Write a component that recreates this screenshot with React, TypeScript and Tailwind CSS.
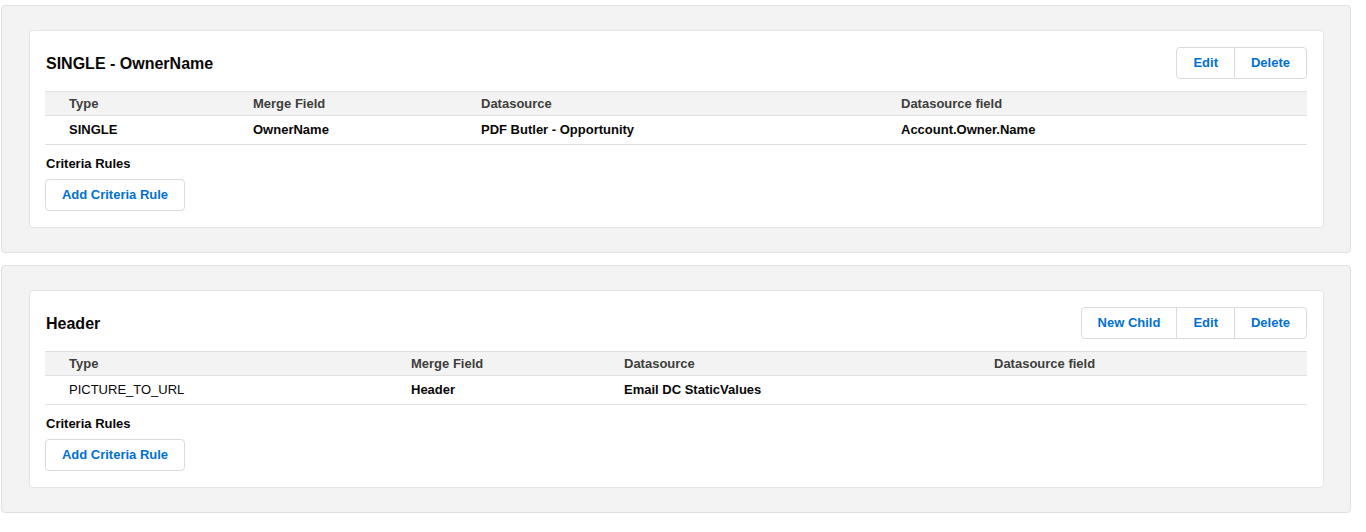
import React from "react";

type Column = { label: string; width?: string; value: string; bold?: boolean };

type Field = {
  title: string;
  actions: string[];
  columns: Column[];
};

const FIELDS: Field[] = [
  {
    title: "SINGLE - OwnerName",
    actions: ["Edit", "Delete"],
    columns: [
      { label: "Type", width: "w-[200px]", value: "SINGLE", bold: true },
      { label: "Merge Field", width: "w-[228px]", value: "OwnerName", bold: true },
      { label: "Datasource", width: "w-[420px]", value: "PDF Butler - Opportunity", bold: true },
      { label: "Datasource field", value: "Account.Owner.Name", bold: true },
    ],
  },
  {
    title: "Header",
    actions: ["New Child", "Edit", "Delete"],
    columns: [
      { label: "Type", width: "w-[358px]", value: "PICTURE_TO_URL" },
      { label: "Merge Field", width: "w-[213px]", value: "Header", bold: true },
      { label: "Datasource", width: "w-[370px]", value: "Email DC StaticValues", bold: true },
      { label: "Datasource field", value: "" },
    ],
  },
];

const ButtonGroup = ({ actions }: { actions: string[] }) => (
  <div className="flex h-[32px] overflow-hidden rounded-[4px] border border-[#dddbda] bg-white">
    {actions.map((a, i) => (
      <button
        key={a}
        className={`px-4 text-[13px] font-bold text-[#0070d2] ${i > 0 ? "border-l border-[#dddbda]" : ""}`}
      >
        {a}
      </button>
    ))}
  </div>
);

const FieldCard = ({ field }: { field: Field }) => (
  <div className="rounded-[4px] border border-[#e0e0e0] bg-[#f3f3f3] pb-[24px] pl-[27px] pr-[26px] pt-[24px]">
    <div className="rounded-[4px] border border-[#e5e5e5] bg-white pb-[16px] pl-[15px] pr-[16px] pt-[16px]">
      <div className="flex items-center justify-between">
        <h2 className="pl-[1px] pt-[2px] text-[16px] font-bold text-[#080707]">{field.title}</h2>
        <ButtonGroup actions={field.actions} />
      </div>

      <table className="mt-[12px] w-full table-fixed border-collapse text-[13px]">
        <thead>
          <tr className="h-[24px] border-y border-[#e0e0e0] bg-[#f3f3f3] text-left text-[#3e3e3c]">
            {field.columns.map((c, i) => (
              <th key={c.label} className={`${c.width ?? ""} p-0 font-bold ${i === 0 ? "pl-[24px]" : "pl-[8px]"}`}>
                {c.label}
              </th>
            ))}
          </tr>
        </thead>
        <tbody>
          <tr className="h-[29px] border-b border-[#e0e0e0] text-[#080707]">
            {field.columns.map((c, i) => (
              <td key={c.label} className={`p-0 ${c.bold ? "font-bold" : "font-normal"} ${i === 0 ? "pl-[24px]" : "pl-[8px]"}`}>
                {c.value}
              </td>
            ))}
          </tr>
        </tbody>
      </table>

      <div className="mt-[9px] pl-[1px] text-[13px] leading-[20px] font-bold text-[#080707]">Criteria Rules</div>
      <button className="mt-[5px] h-[32px] w-[140px] rounded-[4px] border border-[#dddbda] bg-white text-[13px] font-bold text-[#0070d2]">
        Add Criteria Rule
      </button>
    </div>
  </div>
);

export default function App() {
  return (
    <div className="min-h-[532px] bg-white pl-[1px] pt-[5px] font-['Liberation_Sans',Arial,sans-serif]">
      <div className="flex w-[1350px] flex-col gap-[12px]">
        {FIELDS.map((f) => (
          <FieldCard key={f.title} field={f} />
        ))}
      </div>
    </div>
  );
}
